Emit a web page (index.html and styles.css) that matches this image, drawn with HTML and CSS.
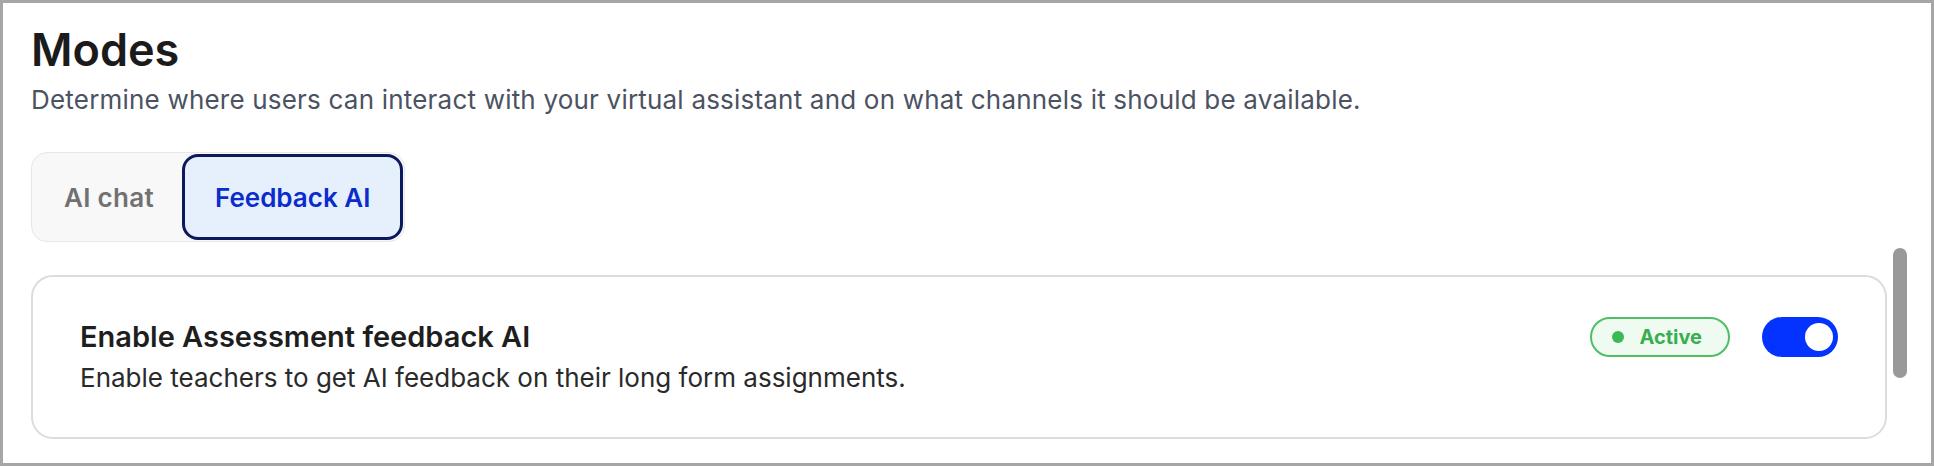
FILE: index.html
```html
<!DOCTYPE html>
<html lang="en">
<head>
<meta charset="utf-8">
<title>Modes</title>
<link rel="stylesheet" href="styles.css">
</head>
<body>
<div class="frame">
  <div class="content">
    <h1 class="title">Modes</h1>
    <p class="subtitle">Determine where users can interact with your virtual assistant and on what channels it should be available.</p>
    <div class="tabs">
      <button class="tab">AI chat</button>
      <button class="tab tab-active">Feedback AI</button>
    </div>
    <div class="card">
      <div class="card-text">
        <div class="card-title">Enable Assessment feedback AI</div>
        <div class="card-desc">Enable teachers to get AI feedback on their long form assignments.</div>
      </div>
      <div class="card-controls">
        <span class="badge"><span class="badge-dot"></span>Active</span>
        <span class="toggle"><span class="toggle-knob"></span></span>
      </div>
    </div>
  </div>
  <div class="scroll-thumb"></div>
</div>
</body>
</html>
```

FILE: styles.css
```css
* { box-sizing: border-box; }
html, body { margin: 0; padding: 0; background: #ffffff; }
body { font-family: Inter, "Noto Sans", "Liberation Sans", sans-serif; }

.frame {
  position: relative;
  width: 1934px;
  height: 466px;
  border: 3px solid #a6a6a6;
  overflow: hidden;
  background: #ffffff;
}

.content {
  padding: 20px 44px 0 28px;
}

.title {
  margin: 0;
  font-size: 45px;
  line-height: 54px;
  font-weight: 600;
  color: #1b1b1b;
}

.subtitle {
  margin: 7px 0 0 0;
  font-size: 26px;
  line-height: 32px;
  font-weight: 400;
  letter-spacing: 0.2px;
  color: #4b5262;
}

.tabs {
  display: inline-flex;
  margin-top: 36px;
  height: 90px;
  padding: 1px;
  background: #f8f8f8;
  border: 1px solid #e7e7e7;
  border-radius: 16px;
}

.tab {
  font-family: inherit;
  border: 3px solid transparent;
  background: transparent;
  border-radius: 16px;
  padding: 0 25px 0 28px;
  font-size: 26px;
  font-weight: 600;
  letter-spacing: 0.3px;
  color: #717171;
  cursor: pointer;
}

.tab-active {
  padding: 0 30px;
  letter-spacing: 0;
  background: #e6f0fd;
  border-color: #0c1a5c;
  color: #0b2ccc;
}

.card {
  margin-top: 33px;
  display: flex;
  justify-content: space-between;
  align-items: flex-start;
  border: 2px solid #dcdcdc;
  border-radius: 22px;
  padding: 40px 47px 42px 47px;
}

.card-title {
  font-size: 29px;
  line-height: 40px;
  font-weight: 600;
  color: #1e1e1e;
}

.card-desc {
  margin-top: 4px;
  font-size: 26px;
  line-height: 34px;
  color: #2a2a2a;
}

.card-controls {
  display: flex;
  align-items: center;
  gap: 32px;
}

.badge {
  display: inline-flex;
  align-items: center;
  gap: 15px;
  height: 40px;
  padding: 0 26px 0 20px;
  border: 2px solid #4fbf63;
  background: #effbf1;
  border-radius: 20px;
  font-size: 20px;
  font-weight: 700;
  color: #39ad51;
}

.badge-dot {
  width: 12px;
  height: 12px;
  border-radius: 50%;
  background: #3cb955;
}

.toggle {
  display: flex;
  align-items: center;
  justify-content: flex-end;
  width: 76px;
  height: 40px;
  padding-right: 5px;
  border-radius: 20px;
  background: #0433ff;
}

.toggle-knob {
  width: 28px;
  height: 28px;
  border-radius: 50%;
  background: #ffffff;
}

.scroll-thumb {
  position: absolute;
  left: 1890px;
  top: 245px;
  width: 14px;
  height: 130px;
  border-radius: 7px;
  background: #999999;
}
```
